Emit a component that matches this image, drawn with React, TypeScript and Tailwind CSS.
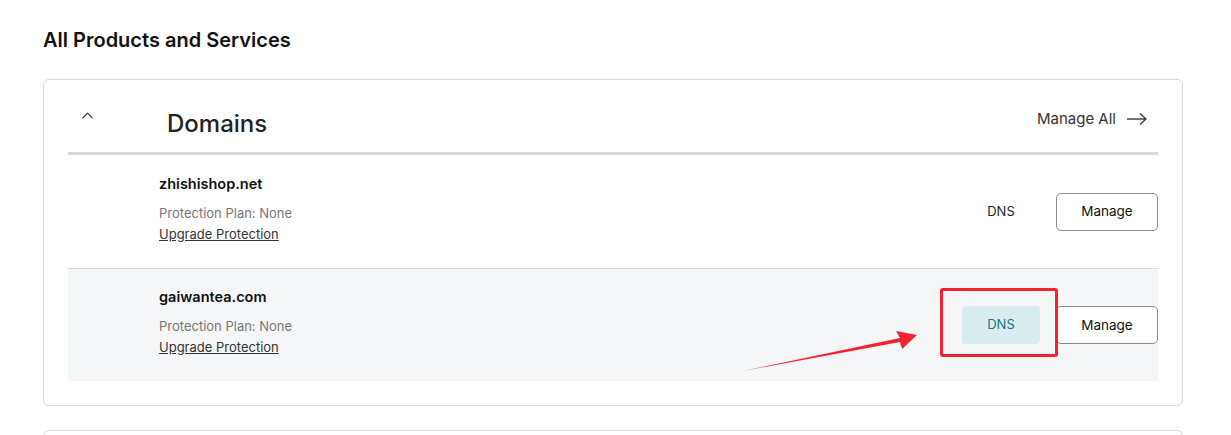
import { ChevronUp } from 'lucide-react';

type Domain = { name: string; highlight?: boolean };

const domains: Domain[] = [
  { name: 'zhishishop.net' },
  { name: 'gaiwantea.com', highlight: true },
];

function DomainRow({ domain, first }: { domain: Domain; first: boolean }) {
  return (
    <div
      className={`relative flex items-center h-[113px] pl-[91px] ${
        first ? '' : 'border-t border-[#d6d9dd] bg-[#f5f6f7]'
      }`}
    >
      <div className="flex-1 -mt-[8px]">
        <div className="text-[14.5px] font-semibold text-[#111] leading-5">{domain.name}</div>
        <div className="mt-[11px] text-[13px] text-[#777] leading-4">Protection Plan: None</div>
        <a className="block mt-[5px] text-[13px] text-[#333] underline leading-4">Upgrade Protection</a>
      </div>
      <div className="flex items-center gap-4">
        <div
          className={`w-[78px] h-[38px] flex items-center justify-center rounded-[4px] text-[13px] ${
            domain.highlight ? 'bg-[#d8eeee] text-[#1e6f7a]' : 'text-[#222]'
          }`}
        >
          DNS
        </div>
        <button className="w-[102px] h-[38px] rounded-[5px] border border-[#8a8a8a] bg-white text-[13.5px] text-[#111]">
          Manage
        </button>
      </div>
      {domain.highlight && (
        <div className="absolute left-[872px] top-[19px] w-[118px] h-[69px] border-[3px] border-[#f5222d] rounded-[3px]" />
      )}
    </div>
  );
}

export default function App() {
  return (
    <div className="min-h-[435px] bg-white pl-[43px] pr-[48px] pt-[26px] font-['Inter','Noto_Sans',sans-serif] overflow-hidden">
      <h2 className="text-[20px] font-semibold text-[#111] leading-7">All Products and Services</h2>

      <div className="relative mt-[25px] border border-[#d9d9d9] rounded-[6px] px-[24px] pb-[24px]">
        <div className="flex items-center h-[75px] border-b-[3px] border-[#d6dae0]">
          <ChevronUp className="ml-[10px] w-[19px] h-[19px] text-[#333] -mt-[1px]" strokeWidth={1.5} />
          <div className="ml-[70px] mt-[16px] text-[24px] font-medium text-[#222]">Domains</div>
          <div className="ml-auto mr-[11px] mt-[6px] flex items-center gap-[11px] text-[15px] text-[#333]">
            Manage All
            <svg width="20" height="12" viewBox="0 0 20 12" fill="none" stroke="#444" strokeWidth="1.5">
              <path d="M0 6 H19 M13 0.5 L19 6 L13 11.5" />
            </svg>
          </div>
        </div>
        {domains.map((d, i) => (
          <DomainRow key={d.name} domain={d} first={i === 0} />
        ))}
        <svg
          className="absolute left-[698px] top-[245px]"
          width="180"
          height="50"
          viewBox="0 0 180 50"
        >
          <path d="M1 46 L158 13 L154 6 L175 10 L160 24 L158 17 Z" fill="#f5222d" />
        </svg>
      </div>

      <div className="mt-[24px] h-[20px] border border-[#d9d9d9] border-b-0 rounded-t-[6px]" />
    </div>
  );
}
